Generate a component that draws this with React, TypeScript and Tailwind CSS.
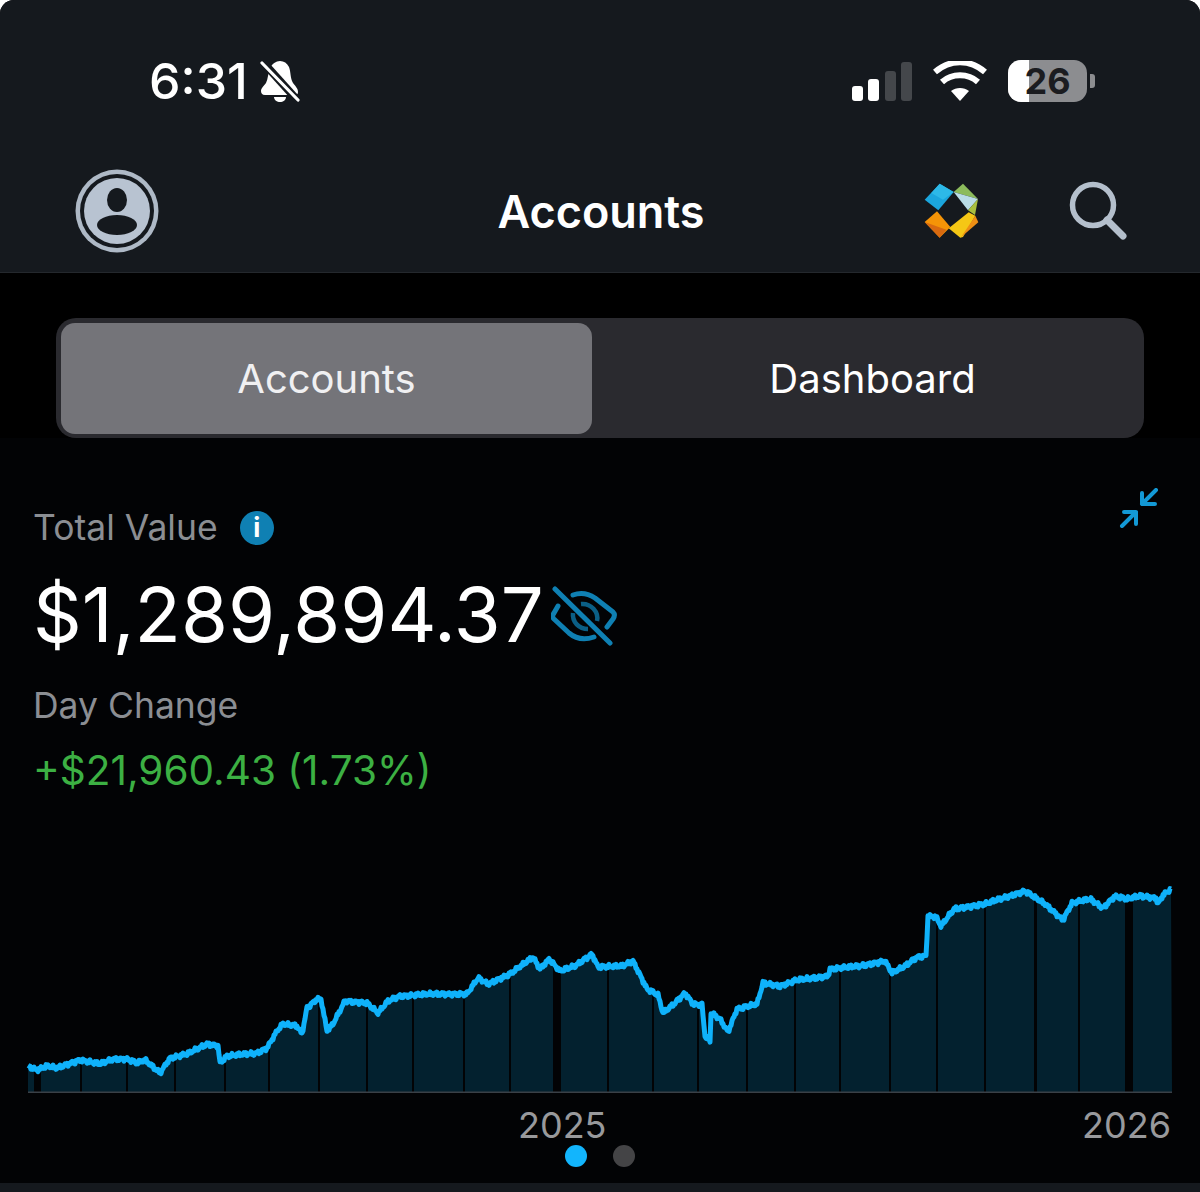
const anchors: [number, number][] = [
  [28, 1065], [37, 1069], [47, 1065], [57, 1067], [80, 1059], [100, 1063], [113, 1058], [127, 1058], [137, 1062], [145, 1059],
  [160, 1072], [170, 1057], [187, 1053], [207, 1043], [218, 1045], [220, 1062], [227, 1055], [257, 1052], [267, 1047], [277, 1030],
  [283, 1023], [297, 1025], [302, 1033], [307, 1007], [317, 998], [321, 998], [327, 1030], [333, 1023], [345, 1000], [367, 1002],
  [378, 1012], [388, 1000], [400, 995], [430, 993], [467, 993], [478, 977], [488, 983], [510, 973], [533, 956], [540, 968],
  [549, 958], [560, 970], [575, 965], [592, 953], [598, 966], [622, 965], [633, 960], [647, 988], [658, 994], [663, 1012],
  [675, 1002], [685, 992], [693, 1003], [702, 1004], [705, 1035], [710, 1040], [711, 1012], [720, 1018], [728, 1031], [737, 1008],
  [757, 1003], [763, 982], [780, 985], [797, 979], [815, 977], [828, 975], [830, 968], [860, 965], [885, 960], [892, 972],
  [905, 965], [917, 956], [926, 955], [928, 915], [936, 916], [941, 925], [954, 908], [985, 903], [1000, 898], [1025, 890],
  [1045, 903], [1063, 919], [1072, 902], [1090, 898], [1103, 907], [1115, 895], [1127, 898], [1140, 895], [1156, 897], [1158, 903],
  [1163, 894], [1171, 888],
];

const gaps: [number, number][] = [
  [34, 7], [80, 2], [126, 2], [174, 2], [224, 2], [268, 2], [318, 2], [366, 2], [412, 2], [463, 2], [509, 2], [553, 8], [607, 2],
  [652, 2], [697, 2], [746, 2], [794, 2], [839, 2], [889, 2], [936, 2], [984, 2], [1034, 3], [1078, 2], [1125, 8],
];

function buildLine() {
  const pts: [number, number][] = [];
  for (let i = 0; i < anchors.length - 1; i++) {
    const [x1, y1] = anchors[i];
    const [x2, y2] = anchors[i + 1];
    const steps = Math.max(1, Math.round(x2 - x1));
    for (let s = 0; s < steps; s++) {
      const t = s / steps;
      const x = x1 + (x2 - x1) * t;
      const noise = Math.sin(x * 2.7) * 1.2 + Math.sin(x * 7.3 + 1) * 1;
      pts.push([x, y1 + (y2 - y1) * t + noise]);
    }
  }
  pts.push(anchors[anchors.length - 1]);
  return pts;
}

function Chart() {
  const pts = buildLine();
  const line = pts.map(([x, y]) => `${x.toFixed(1)},${(y - 880).toFixed(1)}`).join(' ');
  return (
    <svg viewBox="0 0 1200 214" className="block w-[1200px] h-[214px]">
      <polygon points={`28,211 ${line} 1172,211`} fill="#03212f" />
      {gaps.map(([x, w]) => (
        <rect key={x} x={x} y="0" width={w} height="211" fill="#020305" />
      ))}
      <polyline points={line} fill="none" stroke="#0fb2fb" strokeWidth="5" strokeLinejoin="round" />
      <rect x="28" y="210.5" width="1144" height="1.5" fill="#3a4047" />
    </svg>
  );
}

function BellOff() {
  return (
    <svg width="40" height="42" viewBox="0 0 40 42" className="ml-[12px]">
      <path d="M20 1c4 0 7 2 9 6 2 5 1 11 4 16 2 3 5 5 5 9 0 2-1 3-3 3H5c-3 0-4-2-4-4 0-3 3-5 5-8 2-4 2-10 4-15 2-4 6-7 10-7z" fill="#fff" />
      <path d="M14 37h12c0 3-3 5-6 5s-6-2-6-5z" fill="#fff" />
      <path d="M1 0 39 42" stroke="#15191e" strokeWidth="8" />
      <path d="M2 3 38 40" stroke="#fff" strokeWidth="3.2" strokeLinecap="round" />
    </svg>
  );
}

function Wifi() {
  return (
    <svg width="54" height="40" viewBox="0 0 54 40">
      <path d="M27 40 18 30c5-4 13-4 18 0z" fill="#fff" />
      <path d="M9 21c10-9 26-9 36 0" fill="none" stroke="#fff" strokeWidth="6" />
      <path d="M2 11c15-13 35-13 50 0" fill="none" stroke="#fff" strokeWidth="6" />
    </svg>
  );
}

function Profile() {
  return (
    <svg width="84" height="84" viewBox="0 0 84 84" className="-mt-[2px]">
      <circle cx="42" cy="42" r="41.5" fill="#aeb9c6" />
      <circle cx="42" cy="42" r="37" fill="#15191e" />
      <circle cx="42" cy="42" r="33" fill="#b8c3d1" />
      <ellipse cx="42" cy="31" rx="10" ry="12" fill="#15191e" />
      <ellipse cx="42" cy="56" rx="20" ry="10" fill="#15191e" />
    </svg>
  );
}

function Logo() {
  return (
    <svg width="56" height="56" viewBox="370 460 168 168" className="-mt-[2px]">
      <polygon points="375,510 420,462 462,487 416,542" fill="#1ba6dd" />
      <polygon points="420,462 462,487 430,510 395,490" fill="#2db9e8" />
      <polygon points="462,487 490,462 535,508" fill="#8cbb5c" />
      <polygon points="462,487 535,508 505,542" fill="#b9dce6" />
      <polygon points="535,508 526,556 505,542" fill="#a9bf3e" />
      <polygon points="507,548 527,558 490,622 482,624 447,596" fill="#f5c715" />
      <polygon points="527,558 536,578 484,623" fill="#ee8f14" />
      <polygon points="375,577 412,545 452,592 420,624" fill="#f59407" />
      <polygon points="375,577 440,600 420,624" fill="#d96a10" />
    </svg>
  );
}

function EyeOff() {
  return (
    <svg width="66" height="60" viewBox="0 0 66 60" className="ml-[7px] mt-[3px]">
      <g fill="none" stroke="#0f80b3" strokeWidth="5" strokeLinecap="round" strokeLinejoin="round">
        <path d="M22 9C30 6 38 8 44 12L62 26C64 28 64 30 62 33L56 41" />
        <path d="M7 20 3 27C1 30 1 31 3 33L18 47C25 53 34 54 43 51" />
        <path d="M4 3 59 57" />
      </g>
      <g fill="none" stroke="#0b5f86" strokeWidth="4.5">
        <path d="M30 18C40 17 48 26 46 35" />
        <path d="M22 27C21 36 28 43 37 43" />
      </g>
    </svg>
  );
}

export default function App() {
  return (
    <div className="w-[1200px] h-[1192px] overflow-hidden rounded-t-[14px] bg-[#020305] font-[Inter,sans-serif] flex flex-col">
      <header className="h-[273px] bg-[#15191e] border-b border-[#24282d] shrink-0">
        <div className="h-[162px] pl-[149px] pr-[105px] flex items-center justify-between">
          <div className="flex items-center text-white">
            <span className="text-[50px] font-medium leading-none">6:31</span>
            <BellOff />
          </div>
          <div className="flex items-center">
            <div className="flex items-end gap-[5.5px] h-[40px] mr-[21px]">
              <div className="w-[11px] h-[15px] rounded-[3px] bg-white" />
              <div className="w-[11px] h-[22px] rounded-[3px] bg-white" />
              <div className="w-[11px] h-[30px] rounded-[3px] bg-[#44474b]" />
              <div className="w-[11px] h-[39px] rounded-[3px] bg-[#44474b]" />
            </div>
            <Wifi />
            <div className="ml-[21px] w-[79px] h-[42px] rounded-[13px] bg-[#8c8d90] relative flex items-center justify-center">
              <div className="absolute left-0 top-0 bottom-0 w-[21px] rounded-l-[13px] bg-white" />
              <span className="relative text-[36px] font-bold leading-none text-[#1b1c20]">26</span>
            </div>
            <div className="ml-[3px] w-[5px] h-[14px] rounded-r-[3px] bg-[#8c8d90]" />
          </div>
        </div>
        <div className="h-[100px] pl-[75px] pr-[73px] grid grid-cols-[1fr_auto_1fr] items-center">
          <Profile />
          <h1 className="text-[45px] font-semibold text-white leading-none -mt-[2px]">Accounts</h1>
          <div className="flex items-center justify-end gap-[90px]">
            <Logo />
            <svg width="58" height="60" viewBox="0 0 58 60" fill="none" stroke="#b4bfcc" strokeWidth="5.5" strokeLinecap="round" className="-mt-[2px]">
              <circle cx="24" cy="24" r="20.5" />
              <path d="M38 39 54 55" strokeWidth="7" />
            </svg>
          </div>
        </div>
      </header>

      <div className="h-[165px] bg-black pt-[45px] px-[56px] shrink-0">
        <div className="h-[120px] rounded-[20px] bg-[#2a2a2f] p-[5px] flex">
          <div className="w-[531px] h-[111px] rounded-[14px] bg-[#747479] flex items-center justify-center text-[40px] text-[#f0f0f2]">Accounts</div>
          <div className="flex-1 h-[111px] pl-[14px] flex items-center justify-center text-[40px] text-white">Dashboard</div>
        </div>
      </div>

      <section className="mt-[68px] pl-[33px] pr-[41px] shrink-0">
        <div className="flex items-center justify-between h-[44px]">
          <div className="flex items-center gap-[22px]">
            <span className="text-[35.5px] text-[#8b8e93] leading-none">Total Value</span>
            <div className="w-[34px] h-[34px] rounded-full bg-[#0f80b3] flex items-center justify-center text-white text-[26px] font-bold leading-none">i</div>
          </div>
          <svg width="40" height="40" viewBox="0 0 40 40" fill="none" stroke="#1399d6" strokeWidth="4" strokeLinecap="round" strokeLinejoin="round" className="mb-[40px]">
            <path d="M37 2 23 16M23 5V16H36" />
            <path d="M3 38 17 24M17 36V24H5" />
          </svg>
        </div>
        <div className="mt-[22px] flex items-center h-[84px]">
          <span className="text-[76px] text-white leading-none">$1,289,894.37</span>
          <EyeOff />
        </div>
        <div className="mt-[28px] text-[35.5px] text-[#8b8e93] leading-[44px]">Day Change</div>
        <div className="mt-[21px] text-[40.5px] text-[#3cb043] leading-[44px]">+$21,960.43 (1.73%)</div>
      </section>

      <div className="mt-[88px] mb-[8px] shrink-0">
        <Chart />
      </div>

      <div className="relative h-[40px] pr-[29px] flex justify-end text-[36px] text-[#98999c] leading-[44px] shrink-0">
        <span className="absolute left-[518px]">2025</span>
        <span>2026</span>
      </div>

      <div className="flex justify-center gap-[26px] mt-[2px] shrink-0">
        <div className="w-[22px] h-[22px] rounded-full bg-[#12b5fd]" />
        <div className="w-[22px] h-[22px] rounded-full bg-[#444446]" />
      </div>

      <div className="mt-auto h-[9px] bg-[#15191e] shrink-0" />
    </div>
  );
}
